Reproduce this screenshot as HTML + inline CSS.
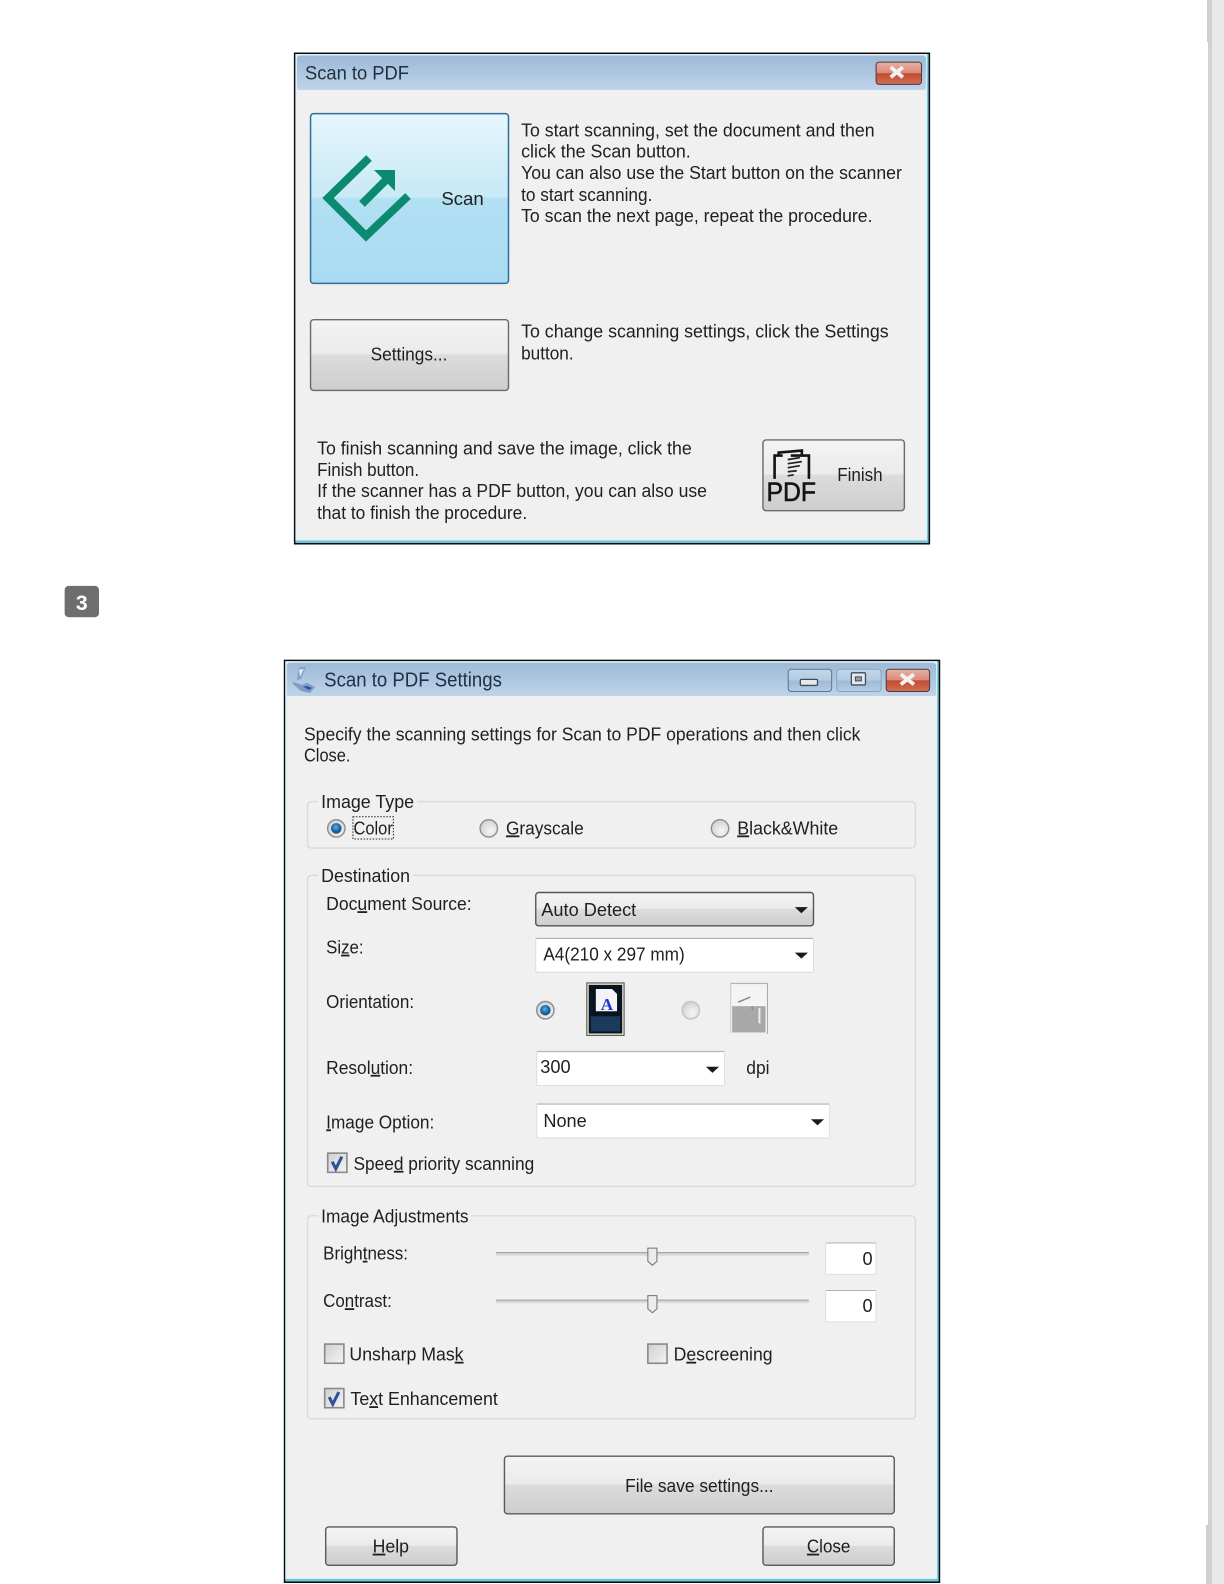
<!DOCTYPE html>
<html><head><meta charset="utf-8"><title>Scan to PDF</title>
<style>
html,body{margin:0;padding:0;background:#fff;width:1224px;height:1584px;overflow:hidden}
svg{display:block;filter:blur(.35px)}
text{font-family:"Liberation Sans",sans-serif;font-size:18px;fill:#1f1f1f}
.u{text-decoration:underline}
</style></head><body>
<svg width="1224" height="1584" viewBox="0 0 1224 1584" xmlns="http://www.w3.org/2000/svg">
<defs>
<linearGradient id="title" x1="0" y1="0" x2="0" y2="1"><stop offset="0" stop-color="#9dbad8"/><stop offset="1" stop-color="#bfd4e9"/></linearGradient>
<linearGradient id="scan" x1="0" y1="0" x2="0" y2="1"><stop offset="0" stop-color="#e6f6fd"/><stop offset=".49" stop-color="#c8e9f6"/><stop offset=".5" stop-color="#b2e0f3"/><stop offset="1" stop-color="#a8dbf2"/></linearGradient>
<linearGradient id="btn" x1="0" y1="0" x2="0" y2="1"><stop offset="0" stop-color="#f4f4f4"/><stop offset=".48" stop-color="#ebebeb"/><stop offset=".5" stop-color="#dcdcdc"/><stop offset="1" stop-color="#cdcdcd"/></linearGradient>
<linearGradient id="red" x1="0" y1="0" x2="0" y2="1"><stop offset="0" stop-color="#e8b0a4"/><stop offset=".48" stop-color="#d98c7c"/><stop offset=".52" stop-color="#c64a2e"/><stop offset="1" stop-color="#d0705a"/></linearGradient>
<linearGradient id="cap" x1="0" y1="0" x2="0" y2="1"><stop offset="0" stop-color="#c3d6ea"/><stop offset=".5" stop-color="#b3cbe3"/><stop offset=".52" stop-color="#9dbad7"/><stop offset="1" stop-color="#b5cce3"/></linearGradient>
<radialGradient id="blue" cx=".45" cy=".4" r=".6"><stop offset="0" stop-color="#5fb5ea"/><stop offset=".6" stop-color="#1a6aa8"/><stop offset="1" stop-color="#0f4a80"/></radialGradient>
<radialGradient id="rad" cx=".6" cy=".65" r=".7"><stop offset="0" stop-color="#f6f6f6"/><stop offset="1" stop-color="#cfcfcf"/></radialGradient>
<linearGradient id="cbf" x1="0" y1="0" x2="1" y2="1"><stop offset="0" stop-color="#cfcfcf"/><stop offset="1" stop-color="#f4f4f4"/></linearGradient>
</defs>
<rect width="1224" height="1584" fill="#fff"/>
<rect x="1208" y="0" width="16" height="1584" fill="#e9e9e9"/>
<rect x="1207" y="0" width="5" height="42" fill="#cfcfcf"/>
<rect x="1208" y="42" width="4" height="1483" fill="#d2d2d2"/>
<rect x="1206" y="1525" width="6" height="59" fill="#cfcfcf"/>
<g transform="scale(1.0099 1.0102)">
<!-- WINDOW 1 -->
<rect x="291" y="52" width="630" height="487" fill="#0c0c0c"/>
<rect x="292.500" y="53.500" width="627" height="484" fill="#6cc6dc"/>
<rect x="292.500" y="53.500" width="625.500" height="481.500" fill="#e2f0f7"/>
<rect x="294" y="55" width="623" height="35" rx="3" fill="url(#title)"/>
<rect x="294" y="89" width="623" height="445" fill="#f0f0f0"/>
<text x="302" y="78.500" textLength="103" lengthAdjust="spacingAndGlyphs" style="font-size:19px;fill:#1f2f3f">Scan to PDF</text>
<rect x="867.500" y="61.500" width="45" height="22" rx="3" fill="url(#red)" stroke="#4a3a3a"/>
<path d="M882 66.500l12 10M894 66.500l-12 10" stroke="#f2f2f2" stroke-width="3.800" fill="none"/>
<rect x="307.500" y="112.500" width="196" height="168" rx="3" fill="url(#scan)" stroke="#2f6f9c" stroke-width="1.500"/>
<text x="437" y="203" textLength="42" lengthAdjust="spacingAndGlyphs">Scan</text>
<text x="516" y="135" textLength="350" lengthAdjust="spacingAndGlyphs">To start scanning, set the document and then</text>
<text x="516" y="156" textLength="168" lengthAdjust="spacingAndGlyphs">click the Scan button.</text>
<text x="516" y="177" textLength="377" lengthAdjust="spacingAndGlyphs">You can also use the Start button on the scanner</text>
<text x="516" y="199" textLength="130" lengthAdjust="spacingAndGlyphs">to start scanning.</text>
<text x="516" y="220" textLength="348" lengthAdjust="spacingAndGlyphs">To scan the next page, repeat the procedure.</text>
<rect x="307.500" y="316.500" width="196" height="70" rx="3" fill="url(#btn)" stroke="#6a6a6a" stroke-width="1.400"/>
<text x="367" y="357" textLength="76" lengthAdjust="spacingAndGlyphs">Settings...</text>
<text x="516" y="334" textLength="364" lengthAdjust="spacingAndGlyphs">To change scanning settings, click the Settings</text>
<text x="516" y="356" textLength="52" lengthAdjust="spacingAndGlyphs">button.</text>
<text x="314" y="450" textLength="371" lengthAdjust="spacingAndGlyphs">To finish scanning and save the image, click the</text>
<text x="314" y="471" textLength="101" lengthAdjust="spacingAndGlyphs">Finish button.</text>
<text x="314" y="492" textLength="386" lengthAdjust="spacingAndGlyphs">If the scanner has a PDF button, you can also use</text>
<text x="314" y="514" textLength="208" lengthAdjust="spacingAndGlyphs">that to finish the procedure.</text>
<rect x="755.500" y="435.500" width="140" height="70" rx="3" fill="url(#btn)" stroke="#6a6a6a" stroke-width="1.400"/>
<text x="829" y="476" textLength="45" lengthAdjust="spacingAndGlyphs">Finish</text>
<text x="759" y="496" textLength="49" lengthAdjust="spacingAndGlyphs" style="font-size:27px;fill:#141414;stroke:#141414;stroke-width:.6px">PDF</text>
<path d="M767 474V451H775M771 451V448L794 446V450M783 451H801V474" fill="none" stroke="#141414" stroke-width="2.600"/>
<path d="M780 455l12-2M780 459l14-2M780 463l12-2M780 467l9-1M780 471l6-1" fill="none" stroke="#222" stroke-width="1.700"/>
<!-- BADGE -->
<rect x="64" y="580" width="34" height="31" rx="4" fill="#6e6e6e"/>
<text x="81" y="604" text-anchor="middle" style="font-size:21px;font-weight:bold;fill:#fff">3</text>
<!-- WINDOW 2 -->
<rect x="281" y="653" width="650" height="914" fill="#0c0c0c"/>
<rect x="282.500" y="654.500" width="647" height="911" fill="#6cc6dc"/>
<rect x="282.500" y="654.500" width="645.500" height="908.500" fill="#e2f0f7"/>
<rect x="284" y="656" width="643" height="34" rx="3" fill="url(#title)"/>
<rect x="284" y="689" width="643" height="873" fill="#f0f0f0"/>
<path d="M296 661l7-1-5 12-4 1zM290 675l9 3 5-2 8 4-5 6-9-2-8-7z" fill="#7f9dc6"/>
<path d="M296 663l5-1-4 8z" fill="#e6ebf2"/><path d="M300 680l6 3 3-2-5-2z" fill="#2f5ba4"/>
<text x="321" y="679.500" textLength="176" lengthAdjust="spacingAndGlyphs" style="font-size:20px;fill:#1d3044">Scan to PDF Settings</text>
<rect x="780.500" y="662.500" width="43" height="22" rx="3" fill="url(#cap)" stroke="#5a7590"/>
<rect x="792.500" y="672.500" width="17" height="6" rx="1" fill="#e8e8e8" stroke="#3f4f5f" stroke-width="1.300"/>
<rect x="828.500" y="662.500" width="44" height="22" rx="3" fill="url(#cap)" stroke="#8aa4bf"/>
<rect x="843" y="666" width="14" height="12" rx="1" fill="#e8e8e8" stroke="#3f4f5f" stroke-width="1.300"/>
<rect x="847" y="670" width="6" height="4" fill="#8fa0b0" stroke="#3f4f5f"/>
<rect x="877.500" y="662.500" width="43" height="22" rx="3" fill="url(#red)" stroke="#4a3a3a"/>
<path d="M892 667.500l13 10M905 667.500l-13 10" stroke="#f2f2f2" stroke-width="3.800" fill="none"/>
<text x="301" y="733" textLength="551" lengthAdjust="spacingAndGlyphs">Specify the scanning settings for Scan to PDF operations and then click</text>
<text x="301" y="754" textLength="46" lengthAdjust="spacingAndGlyphs">Close.</text>
<g fill="none" stroke="#d7dbde" stroke-width="1.400">
<rect x="304.500" y="793.500" width="602" height="46" rx="4"/>
<rect x="304.500" y="866.500" width="602" height="308" rx="4"/>
<rect x="304.500" y="1203.500" width="602" height="201" rx="4"/>
</g>
<rect x="315" y="788" width="98" height="10" fill="#f0f0f0"/>
<rect x="315" y="861" width="94" height="10" fill="#f0f0f0"/>
<rect x="315" y="1198" width="152" height="10" fill="#f0f0f0"/>
<text x="318" y="800" textLength="92" lengthAdjust="spacingAndGlyphs">Image Type</text>
<text x="318" y="873" textLength="88" lengthAdjust="spacingAndGlyphs">Destination</text>
<text x="318" y="1210" textLength="146" lengthAdjust="spacingAndGlyphs">Image Adjustments</text>
<g stroke="#8e8e8e" stroke-width="1.400" fill="url(#rad)">
<circle cx="333" cy="820" r="8.600"/><circle cx="484" cy="820" r="8.600"/><circle cx="713" cy="820" r="8.600"/>
<circle cx="540" cy="1000" r="8.600"/></g>
<circle cx="684" cy="1000" r="8.600" fill="url(#rad)" stroke="#c4c4c4" stroke-width="1.400"/>
<circle cx="333" cy="820" r="5.200" fill="url(#blue)"/><circle cx="540" cy="1000" r="5.200" fill="url(#blue)"/>
<rect x="349.500" y="808.500" width="40" height="22" fill="none" stroke="#222" stroke-dasharray="1.500 1.500"/>
<text x="350" y="826" textLength="39" lengthAdjust="spacingAndGlyphs">Color</text>
<text x="501" y="826" textLength="77" lengthAdjust="spacingAndGlyphs"><tspan class="u">G</tspan>rayscale</text>
<text x="730" y="826" textLength="100" lengthAdjust="spacingAndGlyphs"><tspan class="u">B</tspan>lack&amp;White</text>
<text x="323" y="901" textLength="144" lengthAdjust="spacingAndGlyphs">Doc<tspan class="u">u</tspan>ment Source:</text>
<rect x="530.500" y="883.500" width="275" height="33" rx="3" fill="url(#btn)" stroke="#555" stroke-width="1.400"/>
<text x="536" y="907" textLength="94" lengthAdjust="spacingAndGlyphs">Auto Detect</text>
<path d="M787 898h13l-6.500 6z" fill="#1a1a1a"/>
<text x="323" y="944" textLength="37" lengthAdjust="spacingAndGlyphs">Si<tspan class="u">z</tspan>e:</text>
<rect x="530.500" y="928.500" width="275" height="34" rx="1" fill="#fff" stroke="#dedede"/>
<path d="M531 929h274" stroke="#b0b0b0"/>
<text x="538" y="951" textLength="140" lengthAdjust="spacingAndGlyphs">A4(210 x 297 mm)</text>
<path d="M787 943h13l-6.500 6z" fill="#1a1a1a"/>
<text x="323" y="998" textLength="87" lengthAdjust="spacingAndGlyphs">Orientation:</text>
<rect x="581" y="973" width="37" height="52" fill="#d8d8c8" stroke="#55554a"/>
<rect x="583" y="975" width="33" height="48" fill="#0a1420"/>
<rect x="585" y="1006" width="29" height="15" fill="#1c3a5e"/>
<path d="M590 979h16l5 5v17h-21z" fill="#f4f4f8"/>
<text x="601" y="1000" text-anchor="middle" style="font-size:17px;font-weight:bold;font-family:'Liberation Serif',serif;fill:#2530d0">A</text>
<rect x="725" y="976" width="33" height="46" fill="#f4f4f4"/>
<path d="M723 973.500h37v50" fill="none" stroke="#aaa"/><path d="M723.500 973v50" stroke="#ccc"/>
<rect x="725" y="996" width="33" height="26" fill="#a8a8a8"/>
<path d="M731 992l12-5M745 996v4" stroke="#8a8a8a" stroke-width="1.500" fill="none"/>
<path d="M752 998v15" stroke="#eee" stroke-width="2"/>
<text x="323" y="1063" textLength="86" lengthAdjust="spacingAndGlyphs">Resol<tspan class="u">u</tspan>tion:</text>
<rect x="531.500" y="1040.500" width="186" height="34" rx="1" fill="#fff" stroke="#dedede"/>
<path d="M532 1041h185" stroke="#b0b0b0"/>
<text x="535" y="1062" textLength="30" lengthAdjust="spacingAndGlyphs">300</text>
<path d="M699 1056h13l-6.500 6z" fill="#1a1a1a"/>
<text x="739" y="1063" textLength="23" lengthAdjust="spacingAndGlyphs">dpi</text>
<text x="323" y="1117" textLength="107" lengthAdjust="spacingAndGlyphs"><tspan class="u">I</tspan>mage Option:</text>
<rect x="531.500" y="1092.500" width="290" height="34" rx="1" fill="#fff" stroke="#dedede"/>
<path d="M532 1093h289" stroke="#b0b0b0"/>
<text x="538" y="1115.500" textLength="43" lengthAdjust="spacingAndGlyphs">None</text>
<path d="M803 1108h13l-6.500 6z" fill="#1a1a1a"/>
<g stroke="#8a8a8a" stroke-width="1.600" fill="url(#cbf)">
<rect x="324.500" y="1141.500" width="19" height="19"/>
<rect x="321.500" y="1330.500" width="19" height="19"/>
<rect x="641.500" y="1330.500" width="19" height="19"/>
<rect x="321.500" y="1374.500" width="19" height="19"/></g>
<path d="M329 1150l3.500 7 6-12" fill="none" stroke="#2d4f9e" stroke-width="3"/>
<path d="M326 1383l3.500 7 6-12" fill="none" stroke="#2d4f9e" stroke-width="3"/>
<text x="350" y="1158" textLength="179" lengthAdjust="spacingAndGlyphs">Spee<tspan class="u">d</tspan> priority scanning</text>
<text x="320" y="1247" textLength="84" lengthAdjust="spacingAndGlyphs">Brigh<tspan class="u">t</tspan>ness:</text>
<text x="320" y="1294" textLength="68" lengthAdjust="spacingAndGlyphs">Co<tspan class="u">n</tspan>trast:</text>
<rect x="491" y="1240" width="310" height="3" fill="#d8d8d8"/><path d="M491 1240h310" stroke="#9a9a9a"/>
<rect x="491" y="1287" width="310" height="3" fill="#d8d8d8"/><path d="M491 1287h310" stroke="#9a9a9a"/>
<path d="M641.500 1235.500h9v13l-4.500 4-4.500-4z" fill="#ececec" stroke="#707070"/>
<path d="M641.500 1282.500h9v13l-4.500 4-4.500-4z" fill="#ececec" stroke="#707070"/>
<rect x="817.500" y="1230.500" width="50" height="31" rx="1" fill="#fff" stroke="#dedede"/>
<rect x="817.500" y="1277.500" width="50" height="31" rx="1" fill="#fff" stroke="#dedede"/>
<path d="M818 1230.500h49M818 1277.500h49" stroke="#b0b0b0"/>
<text x="854" y="1252" textLength="10" lengthAdjust="spacingAndGlyphs">0</text>
<text x="854" y="1299" textLength="10" lengthAdjust="spacingAndGlyphs">0</text>
<text x="346" y="1347" textLength="113" lengthAdjust="spacingAndGlyphs">Unsharp Mas<tspan class="u">k</tspan></text>
<text x="667" y="1347" textLength="98" lengthAdjust="spacingAndGlyphs">D<tspan class="u">e</tspan>screening</text>
<text x="347" y="1391" textLength="146" lengthAdjust="spacingAndGlyphs">Te<tspan class="u">x</tspan>t Enhancement</text>
<rect x="499.500" y="1441.500" width="386" height="57" rx="3" fill="url(#btn)" stroke="#5a5a5a" stroke-width="1.400"/>
<text x="619" y="1477" textLength="147" lengthAdjust="spacingAndGlyphs">File save settings...</text>
<rect x="322.500" y="1511.500" width="130" height="38" rx="3" fill="url(#btn)" stroke="#5a5a5a" stroke-width="1.400"/>
<text x="369" y="1537" textLength="36" lengthAdjust="spacingAndGlyphs"><tspan class="u">H</tspan>elp</text>
<rect x="755.500" y="1511.500" width="130" height="38" rx="3" fill="url(#btn)" stroke="#5a5a5a" stroke-width="1.400"/>
<text x="799" y="1537" textLength="43" lengthAdjust="spacingAndGlyphs"><tspan class="u">C</tspan>lose</text>
</g>
<!-- scan icon (true coordinates) -->
<path d="M369 158 L328 198 L366 236 L408 196" fill="none" stroke="#0b8a70" stroke-width="8"/>
<path d="M362 204 L386 180" fill="none" stroke="#0b8a70" stroke-width="8"/>
<path d="M374 170H395V191Z" fill="#0b8a70"/>
</svg>
</body></html>
